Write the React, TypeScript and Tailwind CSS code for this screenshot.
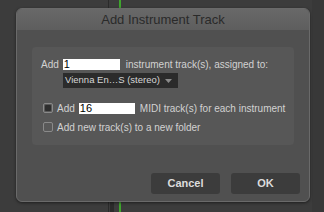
import React from "react";

function Check({ on }: { on?: boolean }) {
  return (
    <div className="w-[10px] h-[10px] shrink-0 rounded-[2px] border border-[#8a8a8a] bg-[#595959] flex items-center justify-center">
      {on && <div className="w-[6px] h-[6px] rounded-[1px] bg-[#2e2e2e]" />}
    </div>
  );
}

export default function App() {
  return (
    <div
      className="relative w-[324px] h-[212px] overflow-hidden bg-[#3c3c3c] text-[#d2d2d2]"
      style={{ fontFamily: '"Liberation Sans", Arial, sans-serif' }}
    >
      {/* track lines behind the dialog */}
      <div className="absolute left-[108px] top-0 h-full w-[1px] bg-[#2a2a2a]" />
      <div className="absolute left-[119px] top-0 h-full w-[2px] bg-[#3fa52d]" />
      <div className="absolute left-[110px] top-[202px] h-[10px] w-[4px] bg-[#2b2b2b]" />
      <div className="absolute left-[312px] top-0 h-full w-[12px] bg-[#383838]" />

      <div className="relative pl-[16px] pt-[8px]">
        <div className="w-[294px] h-[194px] rounded-[6px] border border-[#6a6a6a] bg-[#505050] overflow-hidden flex flex-col shadow-[0_1px_3px_rgba(0,0,0,0.5)]">
          <div className="h-[21px] bg-gradient-to-b from-[#686868] to-[#5e5e5e] flex items-center justify-center text-[13px] text-[#2a2a2a]">
            Add Instrument Track
          </div>

          <div className="ml-[15px] mt-[17px] w-[262px] h-[98px] rounded-[4px] bg-[#575757] pl-[9px] pt-[11px] text-[10px] whitespace-nowrap">
            <div className="flex items-center h-[12px]">
              <span>Add</span>
              <div className="ml-[4px] w-[57px] h-[11px] bg-white text-black text-[11px] leading-[11px] pl-[1px]">1</div>
              <span className="ml-[6px]">instrument track(s), assigned to:</span>
            </div>
            <div className="ml-[22px] mt-[3px] w-[115px] h-[15px] bg-[#2b2b2b] flex items-center pl-[2px] text-[9.5px] text-[#d6d6d6]">
              <span>Vienna En…S (stereo)</span>
              <svg className="ml-auto mr-[6px]" width="7" height="4" viewBox="0 0 7 4">
                <path d="M0 0h7L3.5 4z" fill="#8a8a8a" />
              </svg>
            </div>
            <div className="flex items-center h-[12px] mt-[14px] ml-[2px]">
              <Check on />
              <span className="ml-[4px]">Add</span>
              <div className="ml-[4px] w-[56px] h-[11px] bg-white text-black text-[11px] leading-[11px] pl-[1px]">16</div>
              <span className="ml-[5px]">MIDI track(s) for each instrument</span>
            </div>
            <div className="flex items-center h-[12px] mt-[7px] ml-[2px]">
              <Check />
              <span className="ml-[4px]">Add new track(s) to a new folder</span>
            </div>
          </div>

          <div className="flex justify-end gap-[11px] mt-auto mb-[7px] mr-[9px]">
            <div className="w-[69px] h-[21px] rounded-[3px] bg-[#3c3c3c] flex items-center justify-center text-[11px] font-bold text-[#dcdcdc]">
              Cancel
            </div>
            <div className="w-[69px] h-[21px] rounded-[3px] bg-[#3c3c3c] flex items-center justify-center text-[11px] font-bold text-[#dcdcdc]">
              OK
            </div>
          </div>
        </div>
      </div>
    </div>
  );
}
